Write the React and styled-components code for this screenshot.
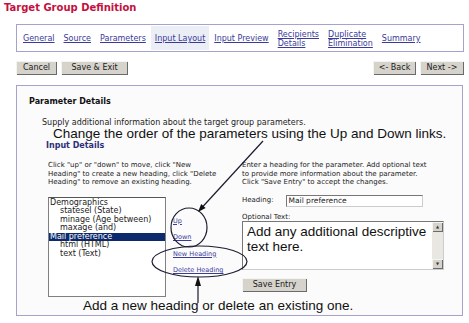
import React from 'react'
import styled, { createGlobalStyle } from 'styled-components'

const GlobalStyle = createGlobalStyle`
  body {
    margin: 0;
    background: #ffffff;
    font-family: 'DejaVu Sans', Verdana, sans-serif;
  }
`

const Page = styled.div`
  position: relative;
  width: 469px;
  height: 323px;
  overflow: hidden;
  background: #ffffff;
`

const Title = styled.h1`
  margin: 0;
  padding: 2px 0 0 4px;
  height: 12px;
  color: #c4103e;
  font-size: 10px;
  line-height: 12px;
  font-weight: bold;
`

const Wrap = styled.div`
  margin-left: 16px;
  width: 448px;
`

const TabBar = styled.nav`
  box-sizing: border-box;
  margin-top: 10px;
  height: 28px;
  display: flex;
  align-items: stretch;
  gap: 1px;
  padding: 1px 0 1px 2px;
  border: 1.5px solid #a5a2cc;
  background: #ffffff;
`

const Tab = styled.a`
  display: flex;
  align-items: center;
  padding: 1px 4px 0;
  color: #3a3a9a;
  font-size: 8px;
  line-height: 9px;
  text-decoration: underline;
  background: ${(p) => (p.$active ? '#eceef5' : 'transparent')};
`

const ButtonRow = styled.div`
  margin-top: 9px;
  display: flex;
  justify-content: space-between;
`

const ButtonGroup = styled.div`
  display: flex;
  gap: 4px;
`

const Button = styled.button`
  box-sizing: border-box;
  height: 14px;
  width: ${(p) => p.$w}px;
  padding: 0;
  font-family: 'DejaVu Sans', Verdana, sans-serif;
  font-size: 8px;
  line-height: 12px;
  color: #202020;
  background: #d6d3cc;
  border: none;
  box-shadow: inset 1px 1px 0 #f4f4f0, inset -1px -1px 0 #6a6a6a;
`

const Panel = styled.section`
  box-sizing: border-box;
  margin-top: 10px;
  width: 447px;
  height: 231px;
  border: 1.5px solid #a5a2cc;
  background: #fbfbfb;
  padding: 11px 0 0 12px;
`

const SectionTitle = styled.h2`
  margin: 0;
  font-size: 8px;
  line-height: 10px;
  font-weight: bold;
  color: #111;
`

const Intro = styled.p`
  margin: 11px 0 0 13px;
  font-size: 8px;
  line-height: 10px;
  color: #222;
`

const Callout = styled.div`
  margin-left: ${(p) => p.$indent || 0}px;
  font-family: 'Liberation Sans', Arial, sans-serif;
  font-size: 13.5px;
  line-height: 14px;
  color: #111;
`

const Lead = styled(Callout)`
  margin-top: -1px;
`

const SubTitle = styled.h3`
  margin: 0 0 0 17px;
  font-size: 8px;
  line-height: 9px;
  font-weight: bold;
  color: #2e2e7a;
`

const Columns = styled.div`
  margin: 11px 0 0 19px;
  display: grid;
  grid-template-columns: 194px 210px;
  height: 139px;
`

const Column = styled.div`
  display: flex;
  flex-direction: column;
`

const Help = styled.p`
  margin: 0;
  font-size: 7px;
  line-height: 8.5px;
  color: #222;
`

const ListRow = styled.div`
  margin-top: 10px;
  display: flex;
  gap: 7px;
`

const ListBox = styled.div`
  box-sizing: border-box;
  width: 118px;
  height: 100px;
  border: 1px solid #808080;
  border-top-color: #555;
  background: #ffffff;
  padding-top: 1px;
`

const ListItem = styled.div`
  padding-left: ${(p) => (p.$child ? 11 : 1)}px;
  font-size: 8px;
  line-height: 8.5px;
  color: ${(p) => (p.$selected ? '#ffffff' : '#222')};
  background: ${(p) => (p.$selected ? '#0c2a6c' : 'transparent')};
`

const Actions = styled.div`
  display: flex;
  flex-direction: column;
  padding-top: 20px;
  gap: 8.6px;
`

const ActionLink = styled.a`
  font-size: 6.5px;
  line-height: 8px;
  color: #3a3a9a;
  text-decoration: underline;
`

const FieldRow = styled.div`
  margin-top: 8px;
  display: flex;
  align-items: center;
  gap: 12px;
`

const Label = styled.span`
  font-size: 7px;
  line-height: 9px;
  color: #222;
`

const TextInput = styled.div`
  box-sizing: border-box;
  width: 137px;
  height: 12px;
  border: 1px solid #777;
  border-right-color: #ccc;
  border-bottom-color: #ccc;
  background: #fff;
  padding-left: 2px;
  font-size: 7.5px;
  line-height: 10px;
  color: #222;
`

const OptionalLabel = styled(Label)`
  margin-top: 6px;
`

const TextArea = styled.div`
  box-sizing: border-box;
  margin-top: -1px;
  width: 202px;
  height: 49px;
  display: flex;
  border: 1px solid #777;
  border-right-color: #ccc;
  border-bottom-color: #ccc;
  background: #ffffff;
`

const AreaText = styled.div`
  flex: 1;
  padding: 2px 0 0 4px;
  font-family: 'Liberation Sans', Arial, sans-serif;
  font-size: 13.5px;
  line-height: 15px;
  color: #111;
`

const ScrollBar = styled.div`
  width: 11px;
  display: flex;
  flex-direction: column;
  justify-content: space-between;
  background: #e9e7e1;
`

const ScrollButton = styled.div`
  box-sizing: border-box;
  height: 10px;
  display: flex;
  align-items: center;
  justify-content: center;
  background: #d6d3cc;
  box-shadow: inset 1px 1px 0 #f4f4f0, inset -1px -1px 0 #6a6a6a;
  font-size: 4px;
  color: #333;
`

const SaveRow = styled.div`
  margin-top: 8px;
  display: flex;
`

const Footer = styled(Callout)`
  margin-top: -1px;
`

const Overlay = styled.svg`
  position: absolute;
  top: 0;
  left: 0;
  pointer-events: none;
`

const tabs = [
  ['General'],
  ['Source'],
  ['Parameters'],
  ['Input Layout', true],
  ['Input Preview'],
  ['Recipients', false, 'Details'],
  ['Duplicate', false, 'Elimination'],
  ['Summary'],
]

const items = [
  ['Demographics'],
  ['statesel (State)', true],
  ['minage (Age between)', true],
  ['maxage (and)', true],
  ['Mail preference', false, true],
  ['html (HTML)', true],
  ['text (Text)', true],
]

export default function App() {
  return (
    <Page>
      <GlobalStyle />
      <Title>Target Group Definition</Title>
      <Wrap>
        <TabBar>
          {tabs.map(([label, active, second]) => (
            <Tab key={label} $active={active}>
              <span>
                {label}
                {second && <br />}
                {second}
              </span>
            </Tab>
          ))}
        </TabBar>
        <ButtonRow>
          <ButtonGroup>
            <Button $w={41}>Cancel</Button>
            <Button $w={67}>Save &amp; Exit</Button>
          </ButtonGroup>
          <ButtonGroup>
            <Button $w={43}>&lt;- Back</Button>
            <Button $w={44}>Next -&gt;</Button>
          </ButtonGroup>
        </ButtonRow>
        <Panel>
          <SectionTitle>Parameter Details</SectionTitle>
          <Intro>Supply additional information about the target group parameters.</Intro>
          <Lead $indent={24}>
            Change the order of the parameters using the Up and Down links.
          </Lead>
          <SubTitle>Input Details</SubTitle>
          <Columns>
            <Column>
              <Help>
                Click "up" or "down" to move, click "New
                <br />
                Heading" to create a new heading, click "Delete
                <br />
                Heading" to remove an existing heading.
              </Help>
              <ListRow>
                <ListBox>
                  {items.map(([text, child, selected]) => (
                    <ListItem key={text} $child={child} $selected={selected}>
                      {text}
                    </ListItem>
                  ))}
                </ListBox>
                <Actions>
                  <ActionLink>Up</ActionLink>
                  <ActionLink>Down</ActionLink>
                  <ActionLink>New Heading</ActionLink>
                  <ActionLink>Delete Heading</ActionLink>
                </Actions>
              </ListRow>
            </Column>
            <Column>
              <Help>
                Enter a heading for the parameter. Add optional text
                <br />
                to provide more information about the parameter.
                <br />
                Click "Save Entry" to accept the changes.
              </Help>
              <FieldRow>
                <Label>Heading:</Label>
                <TextInput>Mail preference</TextInput>
              </FieldRow>
              <OptionalLabel>Optional Text:</OptionalLabel>
              <TextArea>
                <AreaText>
                  Add any additional descriptive
                  <br />
                  text here.
                </AreaText>
                <ScrollBar>
                  <ScrollButton>▲</ScrollButton>
                  <ScrollButton>▼</ScrollButton>
                </ScrollBar>
              </TextArea>
              <SaveRow>
                <Button $w={65}>Save Entry</Button>
              </SaveRow>
            </Column>
          </Columns>
          <Footer $indent={54}>Add a new heading or delete an existing one.</Footer>
        </Panel>
      </Wrap>
      <Overlay width="469" height="323" viewBox="0 0 469 323">
        <g fill="none" stroke="#1c1c30" strokeWidth="1.2">
          <ellipse cx="189" cy="227.5" rx="18" ry="19.5" />
          <ellipse cx="199.5" cy="261.5" rx="47.5" ry="15.5" />
          <line x1="263" y1="141" x2="202" y2="207.5" />
          <line x1="198" y1="303" x2="198" y2="283" />
        </g>
        <g fill="#111">
          <polygon points="198,212 205.6,208.1 201.2,204.1" />
          <polygon points="198,276 195,286 201,286" />
        </g>
      </Overlay>
    </Page>
  )
}
